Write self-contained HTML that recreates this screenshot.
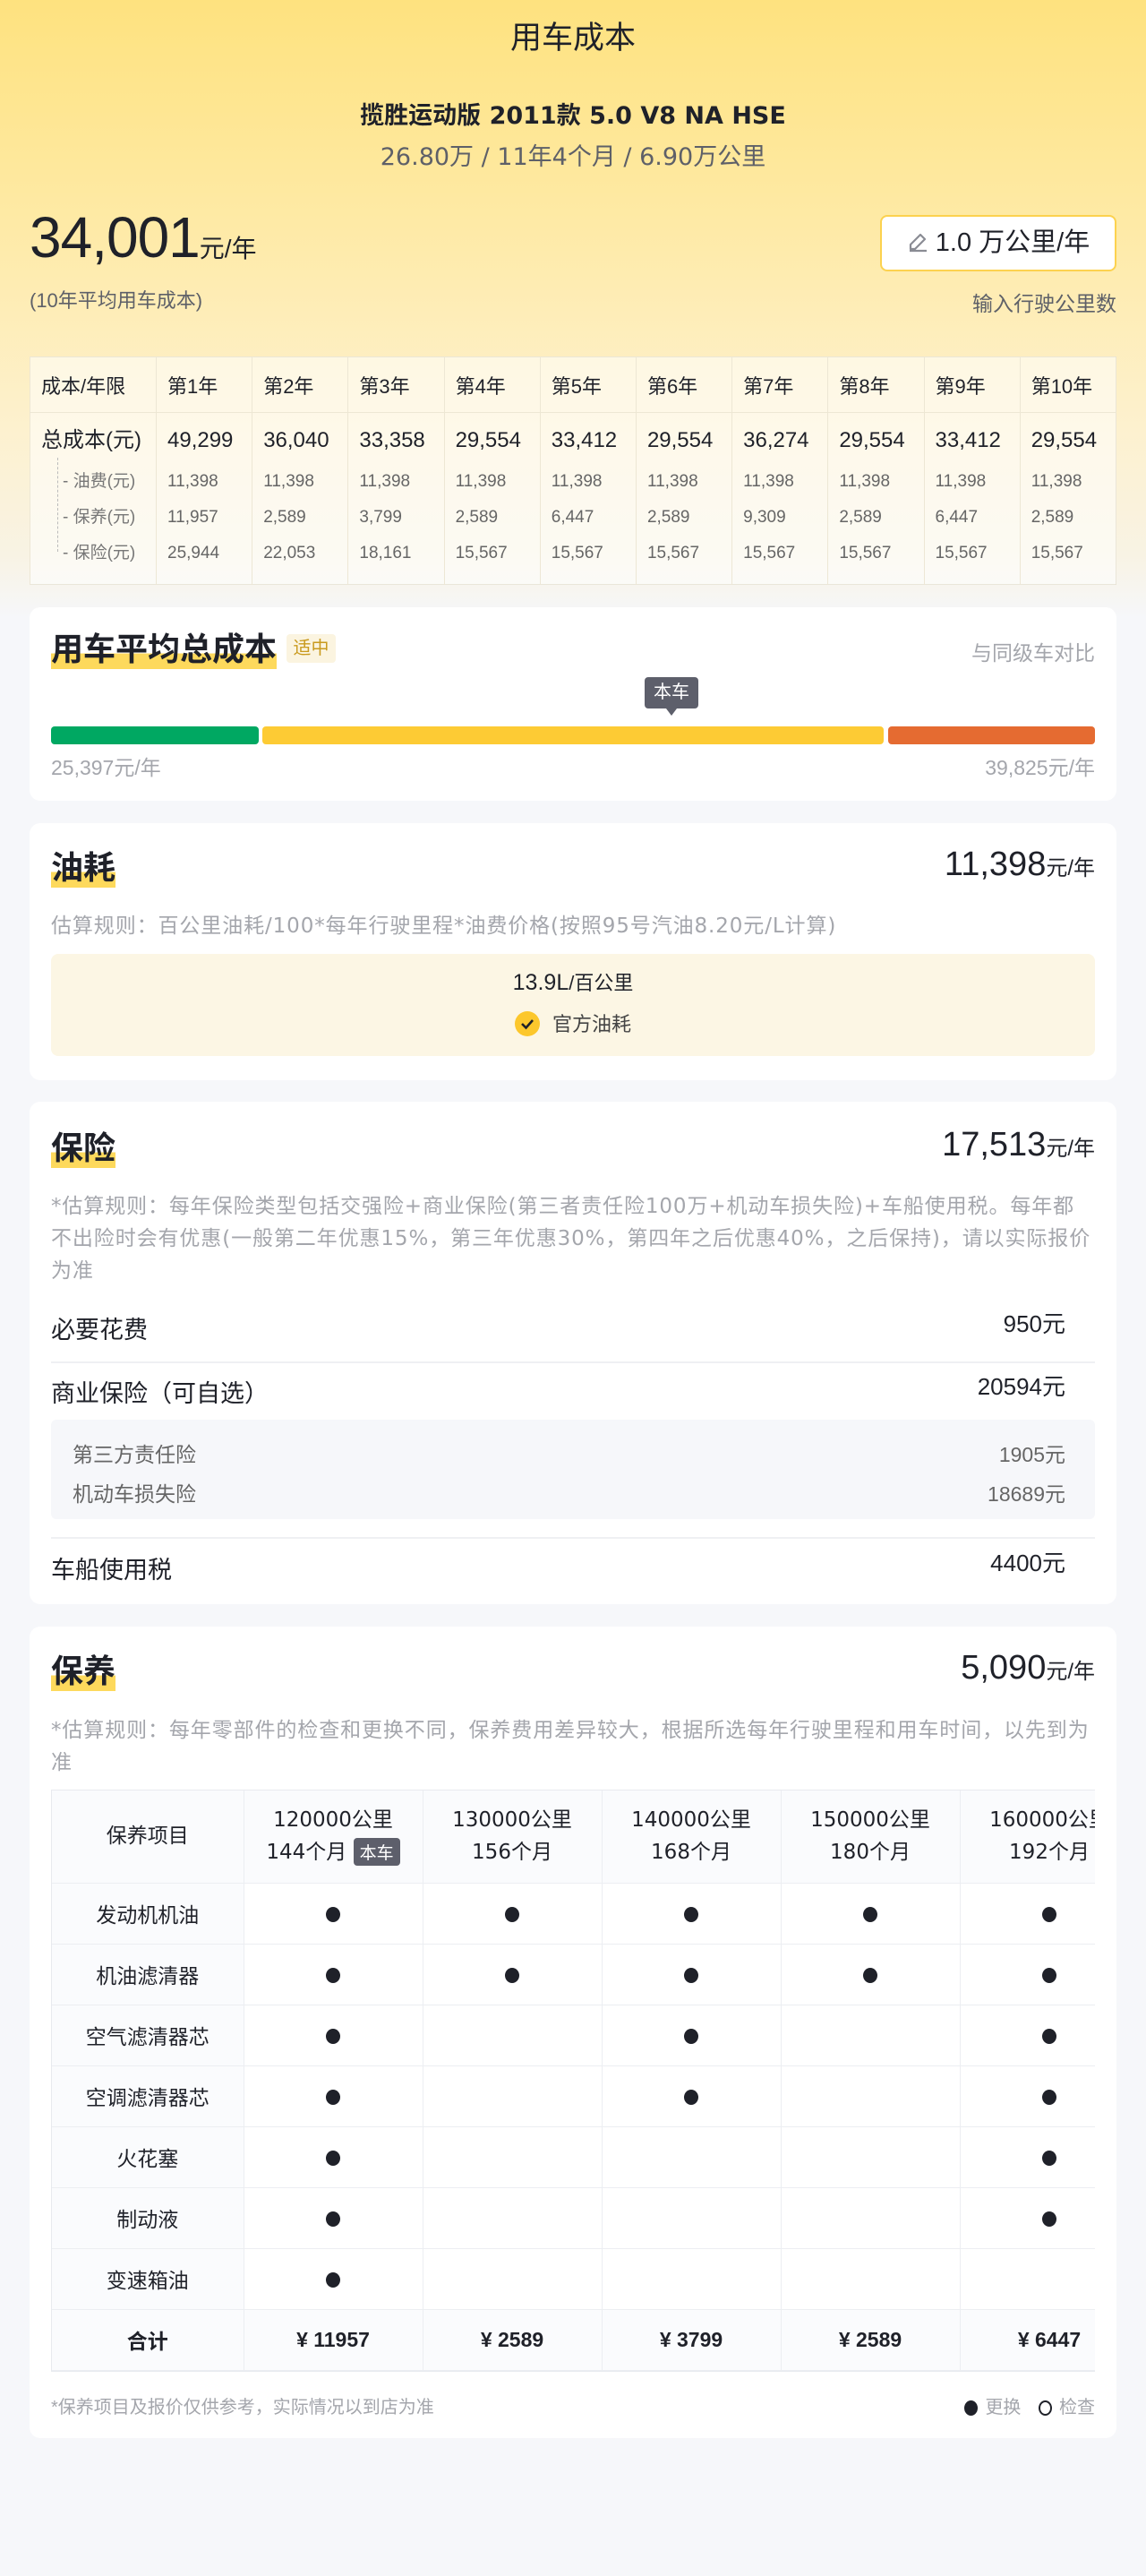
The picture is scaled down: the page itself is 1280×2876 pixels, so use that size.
<!DOCTYPE html>
<html><head><meta charset="utf-8">
<style>
*{margin:0;padding:0;box-sizing:border-box}
body{width:1280px;height:2876px;position:relative;font-family:"Liberation Sans","Noto Sans CJK SC",sans-serif;color:#1f2129;background:#f6f7fa;overflow:hidden}
.top{position:absolute;left:0;top:0;width:1280px;height:700px;background:linear-gradient(180deg,#fee27f 0,#feeaa6 250px,#fdf1cf 480px,#f8f3e4 620px,#f6f7fa 690px)}
.a{position:absolute}
.c{text-align:center}
.dv{font-family:"DejaVu Sans","Noto Sans CJK SC",sans-serif}
.card{position:absolute;left:33px;width:1214px;background:#fff;border-radius:12px}
.h{font-size:36px;font-weight:bold;position:absolute;left:24px;line-height:44px;background:linear-gradient(transparent 60%,#fdd95c 60%)}
.big{position:absolute;right:24px;font-size:38px;line-height:44px}
.big small{font-size:24px}
.rule{position:absolute;left:24px;right:24px;font-size:23px;color:#a4a6ac;line-height:36px;letter-spacing:0.9px;font-family:"DejaVu Sans","Noto Sans CJK SC",sans-serif}
table.y{position:absolute;left:33px;top:398px;width:1214px;height:255px;border-collapse:collapse;background:rgba(255,255,255,.55);border:1px solid rgba(230,225,210,.8)}
table.y td{border-left:1px solid rgba(235,228,210,.9);padding-left:12px;vertical-align:middle;white-space:nowrap}
table.y tr.hd td{height:62px;font-size:22px;border-bottom:1px solid rgba(235,228,210,.9)}
.m{position:absolute;left:57px;top:1998px;width:1166px;overflow:hidden;border:1px solid #e8eaef;border-right:none}
table.m2{border-collapse:collapse;width:1214px;table-layout:fixed}
table.m2 td{border-right:1px solid #eceef2;border-bottom:1px solid #eceef2;text-align:center;font-size:23px;height:68px;white-space:nowrap;overflow:hidden}
table.m2 td:first-child{background:#fafbfd}
table.m2 tr.hd td{height:103px;background:#fafbfd;line-height:36px;font-family:"DejaVu Sans","Noto Sans CJK SC",sans-serif;font-size:23px}
.dot{display:inline-block;width:16px;height:17px;border-radius:50%;background:#1f2129;vertical-align:middle}
</style></head><body>
<div class="top"></div>
<div class="a c" style="left:0;width:1280px;top:20px;font-size:35px;line-height:46px">用车成本</div>
<div class="a c dv" style="left:0;width:1280px;top:112px;font-size:27px;font-weight:bold;line-height:36px">揽胜运动版 2011款 5.0 V8 NA HSE</div>
<div class="a c dv" style="left:0;width:1280px;top:158px;font-size:27px;color:#5e6068;line-height:36px">26.80万 / 11年4个月 / 6.90万公里</div>
<div class="a" style="left:33px;top:228px;font-size:64px;line-height:74px;letter-spacing:-1px">34,001<span style="font-size:28px;letter-spacing:0">元/年</span></div>
<div class="a" style="left:33px;top:318px;font-size:22px;color:#5e6068">(10年平均用车成本)</div>
<div class="a" style="left:983px;top:240px;width:264px;height:63px;background:#fff;border:2px solid #fcd24f;border-radius:8px;font-size:29px;line-height:59px;text-align:center">
<svg width="26" height="26" viewBox="0 0 26 26" style="vertical-align:-3px;margin-right:6px"><path d="M4 21 L4 16 L15 5 L20 10 L9 21 Z M3 23 H22" fill="none" stroke="#8a8c94" stroke-width="2.2" stroke-linejoin="round"/></svg>1.0 万公里/年</div>
<div class="a" style="right:33px;top:320px;font-size:23px;color:#5e6068">输入行驶公里数</div>

<table class="y">
<tr class="hd"><td style="width:141px">成本/年限</td><td>第1年</td><td>第2年</td><td>第3年</td><td>第4年</td><td>第5年</td><td>第6年</td><td>第7年</td><td>第8年</td><td>第9年</td><td>第10年</td></tr>
<tr><td style="vertical-align:top;padding-top:16px;position:relative">
<div style="font-size:24px;line-height:30px">总成本(元)</div>
<div style="position:absolute;left:30px;top:50px;height:105px;border-left:1px dashed #bbb"></div>
<div style="font-size:19px;color:#777;padding-left:24px;line-height:40px;margin-top:11px">- 油费(元)<br>- 保养(元)<br>- 保险(元)</div></td>
<td style="vertical-align:top;padding-top:16px"><div style="font-size:24px;line-height:30px">49,299</div><div style="font-size:19px;color:#666;line-height:40px;margin-top:11px">11,398<br>11,957<br>25,944</div></td>
<td style="vertical-align:top;padding-top:16px"><div style="font-size:24px;line-height:30px">36,040</div><div style="font-size:19px;color:#666;line-height:40px;margin-top:11px">11,398<br>2,589<br>22,053</div></td>
<td style="vertical-align:top;padding-top:16px"><div style="font-size:24px;line-height:30px">33,358</div><div style="font-size:19px;color:#666;line-height:40px;margin-top:11px">11,398<br>3,799<br>18,161</div></td>
<td style="vertical-align:top;padding-top:16px"><div style="font-size:24px;line-height:30px">29,554</div><div style="font-size:19px;color:#666;line-height:40px;margin-top:11px">11,398<br>2,589<br>15,567</div></td>
<td style="vertical-align:top;padding-top:16px"><div style="font-size:24px;line-height:30px">33,412</div><div style="font-size:19px;color:#666;line-height:40px;margin-top:11px">11,398<br>6,447<br>15,567</div></td>
<td style="vertical-align:top;padding-top:16px"><div style="font-size:24px;line-height:30px">29,554</div><div style="font-size:19px;color:#666;line-height:40px;margin-top:11px">11,398<br>2,589<br>15,567</div></td>
<td style="vertical-align:top;padding-top:16px"><div style="font-size:24px;line-height:30px">36,274</div><div style="font-size:19px;color:#666;line-height:40px;margin-top:11px">11,398<br>9,309<br>15,567</div></td>
<td style="vertical-align:top;padding-top:16px"><div style="font-size:24px;line-height:30px">29,554</div><div style="font-size:19px;color:#666;line-height:40px;margin-top:11px">11,398<br>2,589<br>15,567</div></td>
<td style="vertical-align:top;padding-top:16px"><div style="font-size:24px;line-height:30px">33,412</div><div style="font-size:19px;color:#666;line-height:40px;margin-top:11px">11,398<br>6,447<br>15,567</div></td>
<td style="vertical-align:top;padding-top:16px"><div style="font-size:24px;line-height:30px">29,554</div><div style="font-size:19px;color:#666;line-height:40px;margin-top:11px">11,398<br>2,589<br>15,567</div></td>
</tr></table>

<!-- card 1 -->
<div class="card" style="top:678px;height:216px">
<div class="h" style="top:25px">用车平均总成本</div>
<div class="a" style="left:287px;top:30px;width:55px;height:32px;background:#fbf4e0;border-radius:4px;color:#c99a1e;font-size:20px;line-height:32px;text-align:center">适中</div>
<div class="a" style="right:24px;top:32px;font-size:23px;color:#a4a6ac">与同级车对比</div>
<div class="a" style="left:687px;top:78px;width:60px;height:35px;background:#5d5f6b;border-radius:4px;color:#fff;font-size:20px;line-height:35px;text-align:center">本车</div>
<div class="a" style="left:711px;top:113px;border:6px solid transparent;border-top:8px solid #5d5f6b"></div>
<div class="a" style="left:24px;top:133px;width:232px;height:20px;background:#00a862;border-radius:4px"></div>
<div class="a" style="left:260px;top:133px;width:694px;height:20px;background:#fdcb34;border-radius:4px"></div>
<div class="a" style="left:959px;top:133px;width:231px;height:20px;background:#e56b31;border-radius:4px"></div>
<div class="a" style="left:24px;top:160px;font-size:23px;color:#a4a6ac">25,397元/年</div>
<div class="a" style="right:24px;top:160px;font-size:23px;color:#a4a6ac">39,825元/年</div>
</div>

<!-- card 2 -->
<div class="card" style="top:919px;height:287px">
<div class="h" style="top:28px">油耗</div>
<div class="big" style="top:24px">11,398<small>元/年</small></div>
<div class="rule" style="top:97px">估算规则：百公里油耗/100*每年行驶里程*油费价格(按照95号汽油8.20元/L计算)</div>
<div class="a" style="left:24px;top:146px;width:1166px;height:114px;background:#fcf6e4;border-radius:8px">
<div class="a c" style="left:0;width:1166px;top:15px;font-size:25px">13.9L<span style="font-size:22px">/百公里</span></div>
<div class="a c" style="left:0;width:1166px;top:61px;font-size:22px;color:#444"><span style="display:inline-block;width:28px;height:28px;border-radius:50%;background:#fcc72c;vertical-align:-6px;margin-right:14px;position:relative"><svg width="28" height="28" viewBox="0 0 28 28" style="position:absolute;left:0;top:0"><path d="M8 14 L12.5 18.5 L20 10" fill="none" stroke="#1f2129" stroke-width="2.6"/></svg></span>官方油耗</div>
</div>
</div>

<!-- card 3 -->
<div class="card" style="top:1230px;height:561px">
<div class="h" style="top:30px">保险</div>
<div class="big" style="top:26px">17,513<small>元/年</small></div>
<div class="rule" style="top:99px">*估算规则：每年保险类型包括交强险+商业保险(第三者责任险100万+机动车损失险)+车船使用税。每年都不出险时会有优惠(一般第二年优惠15%，第三年优惠30%，第四年之后优惠40%，之后保持)，请以实际报价为准</div>
<div class="a" style="left:24px;top:233px;font-size:27px">必要花费</div>
<div class="a" style="right:57px;top:228px;font-size:26px">950元</div>
<div class="a" style="left:24px;right:24px;top:290px;border-top:2px solid #eff0f3"></div>
<div class="a" style="left:24px;top:304px;font-size:27px">商业保险（可自选）</div>
<div class="a" style="right:57px;top:298px;font-size:26px">20594元</div>
<div class="a" style="left:24px;top:355px;width:1166px;height:111px;background:#f6f7fa;border-radius:6px">
<div class="a" style="left:24px;top:20px;font-size:23px;color:#666">第三方责任险</div>
<div class="a" style="right:33px;top:20px;font-size:23px;color:#666">1905元</div>
<div class="a" style="left:24px;top:64px;font-size:23px;color:#666">机动车损失险</div>
<div class="a" style="right:33px;top:64px;font-size:23px;color:#666">18689元</div>
</div>
<div class="a" style="left:24px;right:24px;top:486px;border-top:2px solid #eff0f3"></div>
<div class="a" style="left:24px;top:501px;font-size:27px">车船使用税</div>
<div class="a" style="right:57px;top:495px;font-size:26px">4400元</div>
</div>

<!-- card 4 -->
<div class="card" style="top:1816px;height:906px">
<div class="h" style="top:28px">保养</div>
<div class="big" style="top:24px">5,090<small>元/年</small></div>
<div class="rule" style="top:98px">*估算规则：每年零部件的检查和更换不同，保养费用差异较大，根据所选每年行驶里程和用车时间，以先到为准</div>
<div class="a" style="left:24px;top:855px;font-size:20px;color:#a4a6ac">*保养项目及报价仅供参考，实际情况以到店为准</div>
<div class="a" style="right:24px;top:855px;font-size:20px;color:#a4a6ac"><span style="display:inline-block;width:15px;height:17px;border-radius:50%;background:#1f2129;vertical-align:-3px;margin-right:8px"></span>更换 <span style="display:inline-block;width:15px;height:17px;border-radius:50%;border:2px solid #1f2129;vertical-align:-3px;margin:0 8px 0 14px"></span>检查</div>
</div>
<div class="m"><table class="m2">
<colgroup><col style="width:214px"><col style="width:200px"><col style="width:200px"><col style="width:200px"><col style="width:200px"><col style="width:200px"></colgroup>
<tr class="hd"><td>保养项目</td><td>120000公里<br>144个月 <span style="background:#5d5f6b;color:#fff;font-size:19px;padding:2px 7px;border-radius:4px;font-family:'Noto Sans CJK SC',sans-serif">本车</span></td><td>130000公里<br>156个月</td><td>140000公里<br>168个月</td><td>150000公里<br>180个月</td><td>160000公里<br>192个月</td></tr>
<tr><td>发动机机油</td><td><i class="dot"></i></td><td><i class="dot"></i></td><td><i class="dot"></i></td><td><i class="dot"></i></td><td><i class="dot"></i></td></tr>
<tr><td>机油滤清器</td><td><i class="dot"></i></td><td><i class="dot"></i></td><td><i class="dot"></i></td><td><i class="dot"></i></td><td><i class="dot"></i></td></tr>
<tr><td>空气滤清器芯</td><td><i class="dot"></i></td><td></td><td><i class="dot"></i></td><td></td><td><i class="dot"></i></td></tr>
<tr><td>空调滤清器芯</td><td><i class="dot"></i></td><td></td><td><i class="dot"></i></td><td></td><td><i class="dot"></i></td></tr>
<tr><td>火花塞</td><td><i class="dot"></i></td><td></td><td></td><td></td><td><i class="dot"></i></td></tr>
<tr><td>制动液</td><td><i class="dot"></i></td><td></td><td></td><td></td><td><i class="dot"></i></td></tr>
<tr><td>变速箱油</td><td><i class="dot"></i></td><td></td><td></td><td></td><td></td></tr>
<tr><td style="font-weight:bold">合计</td><td style="font-weight:bold;background:#fafbfd">¥ 11957</td><td style="font-weight:bold;background:#fafbfd">¥ 2589</td><td style="font-weight:bold;background:#fafbfd">¥ 3799</td><td style="font-weight:bold;background:#fafbfd">¥ 2589</td><td style="font-weight:bold;background:#fafbfd">¥ 6447</td></tr>
</table></div>
</body></html>
